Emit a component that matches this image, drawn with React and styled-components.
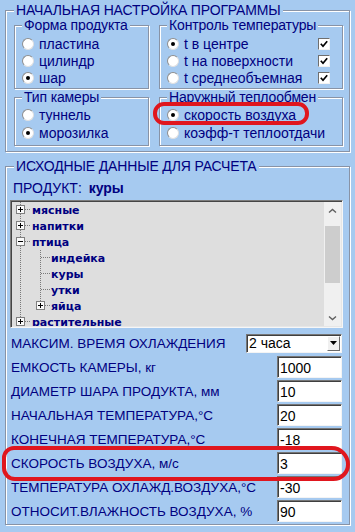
import React from 'react'
import styled, { createGlobalStyle } from 'styled-components'

const GlobalStyle = createGlobalStyle`
  html, body {
    margin: 0;
    padding: 0;
    background: #a6caf0;
  }
  body {
    font-family: "Liberation Sans", Arial, sans-serif;
  }
`

// окно программы
const Window = styled.div`
  position: relative;
  box-sizing: border-box;
  width: 355px;
  height: 532px;
  padding: 3px 5px 0 5px;
  background: #a6caf0;
  color: #000080;
  font-size: 14px;
  overflow: hidden;
`

// рамка группы (как TGroupBox)
const Frame = styled.fieldset`
  box-sizing: border-box;
  margin: ${p => p.$top || 0}px 0 0 0;
  padding: ${p => p.$pad};
  min-width: 0;
  border: 1px solid #8893a6;
  box-shadow: inset 1px 1px 0 #ffffff, 1px 1px 0 #ffffff;
`

const Caption = styled.legend`
  padding: 0 2px;
  margin-left: ${p => p.$indent || 0}px;
  font-size: 14px;
  line-height: 14px;
  letter-spacing: -0.15px;
  white-space: nowrap;
  background: #a6caf0;
`

const SetupGrid = styled.div`
  display: grid;
  grid-template-columns: 135px 184px;
  column-gap: 10px;
  row-gap: 1px;
  margin-top: 1px;
`

const Option = styled.label`
  display: flex;
  align-items: center;
  gap: 5px;
  height: ${p => p.$h || 17}px;
  white-space: nowrap;
`

const Radio = styled.span`
  flex: none;
  display: flex;
  align-items: center;
  justify-content: center;
  box-sizing: border-box;
  width: 12px;
  height: 12px;
  border-radius: 50%;
  background: #ffffff;
  border: 1px solid;
  border-color: #8e8e8e #e0e0e0 #e0e0e0 #8e8e8e;

  &::after {
    content: '';
    width: 4px;
    height: 4px;
    border-radius: 50%;
    background: ${p => (p.$checked ? '#000000' : 'transparent')};
  }
`

const OptionText = styled.span`
  flex: 1;
`

const CheckBox = styled.span`
  flex: none;
  display: flex;
  align-items: center;
  justify-content: center;
  box-sizing: border-box;
  width: 12px;
  height: 12px;
  margin-right: 1px;
  background: #ffffff;
  border: 1px solid;
  border-color: #6f6f6f #f2f2f2 #f2f2f2 #6f6f6f;
`

const Product = styled.div`
  margin: 7px 0 0 3px;
  line-height: 16px;
`

const ProductName = styled.b`
  margin-left: 3px;
`

const Tree = styled.div`
  display: flex;
  box-sizing: border-box;
  height: 128px;
  margin-top: 4px;
  padding: 1px;
  background: #dedede;
  border: 1px solid;
  border-color: #7c7c7c #f6f6f6 #f6f6f6 #7c7c7c;
  box-shadow: inset 1px 1px 0 #454545, inset -1px -1px 0 #e6e6e6;
`

const TreeList = styled.div`
  flex: 1;
  overflow: hidden;
`

const TreeRow = styled.div`
  display: flex;
  align-items: center;
  height: 16px;
  font-family: "DejaVu Sans", Verdana, sans-serif;
  font-size: 11px;
  font-weight: bold;
  white-space: nowrap;
`

const ScrollBar = styled.div`
  display: flex;
  flex-direction: column;
  flex: none;
  width: 17px;
  background: #f0f0f0;
`

const ScrollButton = styled.div`
  display: flex;
  align-items: center;
  justify-content: center;
  height: 17px;
`

const ScrollTrack = styled.div`
  flex: 1;
`

const Thumb = styled.div`
  height: 57px;
  margin: 7px 1px 0;
  background: #cdcdcd;
`

const Params = styled.div`
  margin-top: 3px;
`

const ParamRow = styled.div`
  display: flex;
  align-items: center;
  justify-content: space-between;
  height: 24px;
  padding: 0 1px;
`

const ParamLabel = styled.span`
  font-size: 13.5px;
  white-space: nowrap;
`

const Field = styled.input`
  box-sizing: border-box;
  width: 65px;
  height: 22px;
  margin: 0;
  padding: 1px 0 0 2px;
  font: 14px "Liberation Sans", Arial, sans-serif;
  color: #000000;
  background: #ffffff;
  border: 1px solid;
  border-color: #767676 #f4f4f4 #f4f4f4 #767676;
  box-shadow: inset 1px 1px 0 #3f3f3f;
  outline: none;
`

const Combo = styled.div`
  display: flex;
  align-items: center;
  box-sizing: border-box;
  width: 96px;
  height: 19px;
  padding-left: 2px;
  color: #000000;
  background: #ffffff;
  border: 1px solid;
  border-color: #767676 #f4f4f4 #f4f4f4 #767676;
  box-shadow: inset 1px 1px 0 #3f3f3f;
`

const ComboValue = styled.span`
  flex: 1;
`

const ComboButton = styled.span`
  display: flex;
  align-items: center;
  justify-content: center;
  box-sizing: border-box;
  width: 13px;
  height: 15px;
  margin-right: 1px;
  background: #f0f0f0;
  border: 1px solid;
  border-color: #ffffff #6a6a6a #6a6a6a #ffffff;
`

// красные пометки поверх окна
const Highlight = styled.div`
  position: absolute;
  left: ${p => p.$x}px;
  top: ${p => p.$y}px;
  width: ${p => p.$w}px;
  height: ${p => p.$h}px;
  box-sizing: border-box;
  border: 4px solid #e0161e;
  border-radius: ${p => p.$r};
  pointer-events: none;
`

const Tick = () => (
  <svg width="8" height="8" viewBox="0 0 8 8">
    <path d="M0.8 3.8 L3 6.2 L7.2 1.2" fill="none" stroke="#000" strokeWidth="1.7" />
  </svg>
)

const Chevron = ({ down }) => (
  <svg width="9" height="6" viewBox="0 0 9 6">
    <path
      d={down ? 'M1 1.5 L4.5 4.5 L8 1.5' : 'M1 4.5 L4.5 1.5 L8 4.5'}
      fill="none"
      stroke="#606060"
      strokeWidth="1.4"
    />
  </svg>
)

const DropArrow = () => (
  <svg width="7" height="4" viewBox="0 0 7 4">
    <path d="M0 0 H7 L3.5 4 Z" fill="#000" />
  </svg>
)

// линии дерева и кнопки +/-
const Connector = ({ level, toggle, last }) => {
  const width = level ? 39 : 20
  const bx = level ? 24 : 4
  const dots = { stroke: '#7a7a7a', strokeDasharray: '1 1', strokeWidth: 1 }
  return (
    <svg width={width} height="16" viewBox={`0 0 ${width} 16`} style={{ flex: 'none' }}>
      <line x1="8.5" y1="0" x2="8.5" y2="16" {...dots} />
      {level > 0 && <line x1="28.5" y1="0" x2="28.5" y2={last ? 8 : 16} {...dots} />}
      <line x1={bx + (toggle ? 9 : 5)} y1="7.5" x2={bx + 15} y2="7.5" {...dots} />
      {toggle && (
        <g>
          <rect x={bx + 0.5} y="3.5" width="8" height="8" fill="#fafafa" stroke="#808080" />
          <line x1={bx + 2} y1="7.5" x2={bx + 7} y2="7.5" stroke="#000" />
          {toggle === 'plus' && <line x1={bx + 4.5} y1="5" x2={bx + 4.5} y2="10" stroke="#000" />}
        </g>
      )}
    </svg>
  )
}

const treeItems = [
  { name: 'мясные', level: 0, toggle: 'plus' },
  { name: 'напитки', level: 0, toggle: 'plus' },
  { name: 'птица', level: 0, toggle: 'minus' },
  { name: 'индейка', level: 1 },
  { name: 'куры', level: 1 },
  { name: 'утки', level: 1 },
  { name: 'яйца', level: 1, toggle: 'plus', last: true },
  { name: 'растительные', level: 0, toggle: 'plus' },
]

const params = [
  { label: 'ЕМКОСТЬ КАМЕРЫ, кг', value: '1000' },
  { label: 'ДИАМЕТР ШАРА ПРОДУКТА, мм', value: '10' },
  { label: 'НАЧАЛЬНАЯ ТЕМПЕРАТУРА,°С', value: '20' },
  { label: 'КОНЕЧНАЯ ТЕМПЕРАТУРА,°С', value: '-18' },
  { label: 'СКОРОСТЬ ВОЗДУХА, м/с', value: '3' },
  { label: 'ТЕМПЕРАТУРА ОХЛАЖД.ВОЗДУХА,°С', value: '-30' },
  { label: 'ОТНОСИТ.ВЛАЖНОСТЬ ВОЗДУХА, %', value: '90' },
]

const RadioOption = ({ checked, h, children }) => (
  <Option $h={h}>
    <Radio $checked={checked} />
    <OptionText>{children}</OptionText>
  </Option>
)

export default function App() {
  return (
    <Window>
      <GlobalStyle />

      <Frame $pad="0 6px 5px 8px">
        <Caption>НАЧАЛЬНАЯ НАСТРОЙКА ПРОГРАММЫ</Caption>
        <SetupGrid>
          <Frame $pad="3px 4px 2px 7px">
            <Caption>Форма продукта</Caption>
            <RadioOption>пластина</RadioOption>
            <RadioOption>цилиндр</RadioOption>
            <RadioOption checked>шар</RadioOption>
          </Frame>

          <Frame $pad="3px 11px 2px 7px">
            <Caption>Контроль температуры</Caption>
            {['t в центре', 't на поверхности', 't среднеобъемная'].map((t, i) => (
              <Option key={t}>
                <Radio $checked={i === 0} />
                <OptionText>{t}</OptionText>
                <CheckBox>
                  <Tick />
                </CheckBox>
              </Option>
            ))}
          </Frame>

          <Frame $pad="2px 4px 3px 7px">
            <Caption>Тип камеры</Caption>
            <RadioOption h={18}>туннель</RadioOption>
            <RadioOption h={18} checked>морозилка</RadioOption>
          </Frame>

          <Frame $pad="2px 4px 3px 7px">
            <Caption>Наружный теплообмен</Caption>
            <RadioOption h={18} checked>скорость воздуха</RadioOption>
            <RadioOption h={18}>коэфф-т теплоотдачи</RadioOption>
          </Frame>
        </SetupGrid>
      </Frame>

      <Frame $top={7} $pad="0 6px 1px 4px">
        <Caption $indent={4}>ИСХОДНЫЕ ДАННЫЕ ДЛЯ РАСЧЕТА</Caption>
        <Product>
          ПРОДУКТ: <ProductName>куры</ProductName>
        </Product>

        <Tree>
          <TreeList>
            {treeItems.map(item => (
              <TreeRow key={item.name}>
                <Connector level={item.level} toggle={item.toggle} last={item.last} />
                {item.name}
              </TreeRow>
            ))}
          </TreeList>
          <ScrollBar>
            <ScrollButton>
              <Chevron />
            </ScrollButton>
            <ScrollTrack>
              <Thumb />
            </ScrollTrack>
            <ScrollButton>
              <Chevron down />
            </ScrollButton>
          </ScrollBar>
        </Tree>

        <Params>
          <ParamRow>
            <ParamLabel>МАКСИМ. ВРЕМЯ ОХЛАЖДЕНИЯ</ParamLabel>
            <Combo>
              <ComboValue>2 часа</ComboValue>
              <ComboButton>
                <DropArrow />
              </ComboButton>
            </Combo>
          </ParamRow>
          {params.map(p => (
            <ParamRow key={p.label}>
              <ParamLabel>{p.label}</ParamLabel>
              <Field defaultValue={p.value} readOnly />
            </ParamRow>
          ))}
        </Params>
      </Frame>

      <Highlight $x={153} $y={102} $w={156} $h={23} $r="11px" />
      <Highlight $x={2} $y={446} $w={348} $h={35} $r="13px 20px 18px 14px" />
    </Window>
  )
}
